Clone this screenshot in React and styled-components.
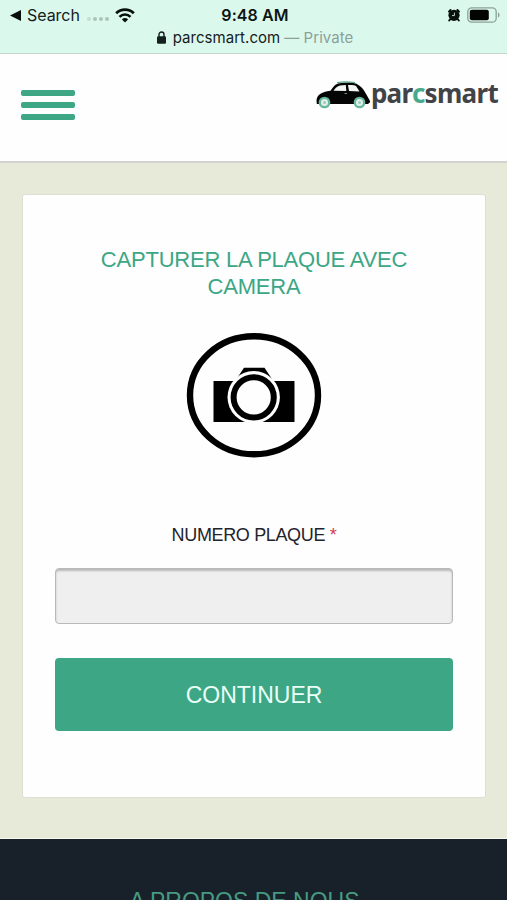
import React from "react";
import styled, { createGlobalStyle } from "styled-components";

const GlobalStyle = createGlobalStyle`
  :root {
    --green: #3ca685;
    --mint: #dbf8ed;
    --sand: #e8ead9;
    --night: #18202a;
  }
  * {
    box-sizing: border-box;
  }
  body {
    margin: 0;
    background: var(--night);
    font-family: "Liberation Sans", Arial, sans-serif;
    overflow: hidden;
  }
`;

const Page = styled.div`
  height: 900px;
  overflow: hidden;
  display: flex;
  flex-direction: column;
`;

const StatusBar = styled.div`
  flex: none;
  height: 54px;
  background: var(--mint);
  border-bottom: 1px solid #c3d5cd;
  font-family: Inter, sans-serif;
  color: #14201c;
  padding-top: 4px;
`;

const StatusRow = styled.div`
  display: grid;
  grid-template-columns: 1fr auto 1fr;
  align-items: center;
  height: 22px;
  padding: 0 7px 0 10px;
`;

const Back = styled.div`
  display: flex;
  align-items: center;
  font-size: 16px;
  letter-spacing: -0.05px;
  span {
    margin: 0 7px 0 6px;
  }
`;

const Time = styled.strong`
  font-size: 16px;
  font-weight: 600;
  letter-spacing: 0.1px;
  color: #0c1512;
`;

const Indicators = styled.div`
  display: flex;
  justify-content: flex-end;
  align-items: center;
  gap: 6px;
`;

const Signal = styled.div`
  display: flex;
  align-items: flex-end;
  gap: 2px;
  margin: 8px 6px 0 0;
  i {
    width: 4px;
    height: 4px;
    border-radius: 50%;
    background: #a9c4ba;
  }
  i:first-child {
    opacity: 0.5;
  }
`;

const Address = styled.div`
  display: flex;
  justify-content: center;
  align-items: center;
  height: 22px;
  padding-left: 3px;
  font-size: 15px;
  letter-spacing: 0.05px;
  svg {
    margin-right: 7px;
  }
  span {
    margin-left: 4px;
    color: #8ba198;
  }
`;

const Header = styled.header`
  flex: none;
  display: flex;
  justify-content: space-between;
  align-items: flex-start;
  height: 109px;
  padding: 27px 9px 0 21px;
  background: #fefefe;
  border-bottom: 2px solid #d2d2cf;
`;

const MenuButton = styled.button`
  display: flex;
  flex-direction: column;
  gap: 6px;
  margin-top: 9px;
  padding: 0;
  border: 0;
  background: none;
  span {
    width: 54px;
    height: 6px;
    border-radius: 2px;
    background: var(--green);
  }
`;

const Logo = styled.div`
  display: flex;
  align-items: flex-start;
  font-family: "Noto Sans", sans-serif;
  font-size: 26px;
  font-weight: 700;
  line-height: 24px;
  letter-spacing: -0.7px;
  color: #424347;
  em {
    font-style: normal;
    color: #48a98b;
  }
`;

const Main = styled.main`
  flex: none;
  height: 676px;
  padding: 31px 21px 0 22px;
  background: var(--sand);
  border-bottom: 1px solid #f8f9f0;
`;

const Card = styled.section`
  display: flex;
  flex-direction: column;
  align-items: center;
  height: 604px;
  padding: 51px 32px 0;
  background: #fefefe;
  border: 1px solid #dcdfd2;
  border-radius: 3px;
`;

const Title = styled.h1`
  margin: 0 0 32px;
  font-size: 22px;
  font-weight: 400;
  line-height: 27px;
  letter-spacing: -0.22px;
  text-align: center;
  color: var(--green);
`;

const Label = styled.label`
  margin: 65px 0 21px;
  font-size: 18px;
  line-height: 24px;
  letter-spacing: -0.35px;
  color: #23232b;
  span {
    color: #cf3c58;
  }
`;

const PlateInput = styled.input`
  width: 398px;
  height: 56px;
  padding: 0 14px;
  border: 1px solid #b9b9b9;
  border-radius: 4px;
  background: #efefef;
  box-shadow: inset 0 2px 2px #b9b9b9;
  font-size: 20px;
`;

const Submit = styled.button`
  width: 398px;
  height: 73px;
  margin-top: 34px;
  padding: 2px 0 0;
  border: 0;
  border-radius: 4px;
  background: var(--green);
  color: #e9fff7;
  font-family: inherit;
  font-size: 23px;
`;

const Footer = styled.footer`
  flex: 1;
  padding: 49px 18px 0 0;
  background: var(--night);
  text-align: center;
  font-size: 23px;
  line-height: 27px;
  color: #469a80;
`;

const WifiIcon = () => (
  <svg width="20" height="15" viewBox="0 0 20 15" fill="none" stroke="#07100d">
    <path d="M1.2 5.3a12.5 12.5 0 0 1 17.6 0" strokeWidth="2.8" />
    <path d="M4.5 8.8a7.8 7.8 0 0 1 11 0" strokeWidth="2.6" />
    <path d="M10 14.5 6.9 11.4a4.4 4.4 0 0 1 6.2 0z" fill="#07100d" stroke="none" />
  </svg>
);

const AlarmIcon = () => (
  <svg width="14" height="14" viewBox="0 0 14 14">
    <path
      d="M2 3.6 3.6 2M10.4 2 12 3.6M3 11.5l-.8 1M11 11.5l.8 1"
      stroke="#07100d"
      strokeWidth="2"
      strokeLinecap="round"
    />
    <circle cx="7" cy="7.3" r="5.6" fill="#07100d" />
    <path d="M7.4 4.6v3H5" fill="none" stroke="#d4eee4" strokeWidth="0.9" />
  </svg>
);

const BatteryIcon = () => (
  <svg width="33" height="16" viewBox="0 0 33 16">
    <rect x="0.8" y="0.8" width="28.4" height="14.4" rx="4" fill="none" stroke="#8ca198" strokeWidth="1.3" />
    <rect x="2.8" y="2.8" width="19" height="10.4" rx="2" fill="#020504" />
    <path d="M31 5.5c2 .6 2 4.4 0 5z" fill="#8ca198" />
  </svg>
);

const LockIcon = () => (
  <svg width="9" height="13" viewBox="0 0 9 13">
    <rect x="0" y="5.2" width="9" height="7.5" rx="1.2" fill="#14201c" />
    <path d="M2 6V3.5a2.5 2.5 0 0 1 5 0V6" fill="none" stroke="#14201c" strokeWidth="1.4" />
  </svg>
);

const CarIcon = () => (
  <svg width="55" height="28" viewBox="0 0 55 28">
    <path
      d="M.5 19.5C1 14 5 10.800 14.500 9.700C17 6 19 3.500 22 2.500C29 1 36 1.200 40.500 2.800C45 5 47.500 8.500 49.500 12C51.500 15.500 53.500 18.500 54.300 21L52 23H.8z"
      fill="#050505"
    />
    <path d="M17.500 9.800C19.500 6.800 21.500 5 24 4.400L29.800 4.100 30.300 10zM32 4.100C36 3.900 38.500 4.200 40 5L43.500 10.600 33 10z" fill="#f3f5f4" />
    <path d="M21 1.600Q30 .2 39 1.600" fill="none" stroke="#58aa92" strokeWidth="1.400" />
    <path d="M28.500 12.500h2.600" stroke="#9da5a2" strokeWidth=".8" />
    <g fill="#e2eee9" stroke="#65b89d" strokeWidth="2.300">
      <circle cx="8.500" cy="21.500" r="4.700" />
      <circle cx="43.500" cy="21.500" r="4.700" />
    </g>
    <g fill="#9bcbb9">
      <circle cx="8.500" cy="21.500" r="1.500" />
      <circle cx="43.500" cy="21.500" r="1.500" />
    </g>
  </svg>
);

const CameraIcon = () => (
  <svg width="136" height="126" viewBox="0 0 136 126">
    <ellipse cx="68" cy="63.300" rx="64" ry="59" fill="none" stroke="#000" strokeWidth="6.400" />
    <path d="M27.500 49h81v41h-81zM50.500 47l7.500-11.200h20.500L86 47z" />
    <circle cx="67.700" cy="65.300" r="26.200" fill="#fefefe" />
    <circle cx="67.700" cy="65.300" r="20.100" fill="none" stroke="#000" strokeWidth="6" />
  </svg>
);

function App() {
  return (
    <Page>
      <GlobalStyle />
      <StatusBar>
        <StatusRow>
          <Back>
            <svg width="11" height="11" viewBox="0 0 11 11">
              <path d="M0 5.500 11 0v11z" fill="#07100d" />
            </svg>
            <span>Search</span>
            <Signal>
              <i />
              <i />
              <i />
              <i />
            </Signal>
            <WifiIcon />
          </Back>
          <Time>9:48 AM</Time>
          <Indicators>
            <AlarmIcon />
            <BatteryIcon />
          </Indicators>
        </StatusRow>
        <Address>
          <LockIcon />
          parcsmart.com <span>— Private</span>
        </Address>
      </StatusBar>
      <Header>
        <MenuButton aria-label="Menu">
          <span />
          <span />
          <span />
        </MenuButton>
        <Logo>
          <CarIcon />
          <div>
            par<em>c</em>smart
          </div>
        </Logo>
      </Header>
      <Main>
        <Card>
          <Title>
            CAPTURER LA PLAQUE AVEC
            <br />
            CAMERA
          </Title>
          <CameraIcon />
          <Label htmlFor="plate">
            NUMERO PLAQUE <span>*</span>
          </Label>
          <PlateInput id="plate" />
          <Submit>CONTINUER</Submit>
        </Card>
      </Main>
      <Footer>A PROPOS DE NOUS</Footer>
    </Page>
  );
}

export default App;
